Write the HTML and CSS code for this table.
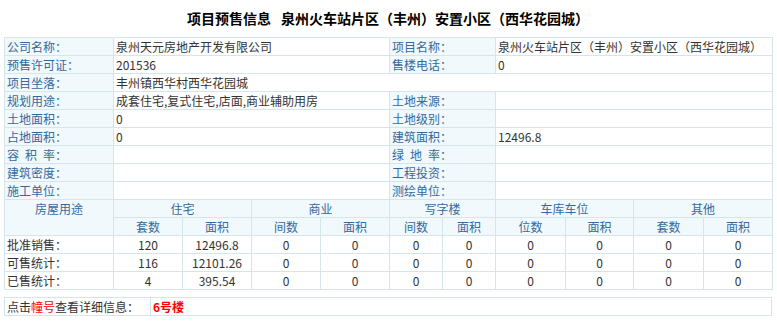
FILE: index.html
```html
<!DOCTYPE html>
<html lang="zh-CN">
<head>
  <meta charset="UTF-8" />
  <title>项目预售信息</title>
  <link rel="stylesheet" href="styles.css">
</head>
<body>
  <div class="title">项目预售信息<span class="title-name">泉州火车站片区（丰州）安置小区（西华花园城）</span></div>

  <table class="info">
    <colgroup>
      <col class="w-label">
      <col class="w69"><col class="w69">
      <col class="w69"><col class="w69">
      <col class="w53"><col class="w53">
      <col class="w70"><col class="w68">
      <col class="w70"><col class="w69">
    </colgroup>
    <tr>
      <td class="label">公司名称：</td>
      <td colspan="4">泉州天元房地产开发有限公司</td>
      <td class="label" colspan="2">项目名称：</td>
      <td colspan="4">泉州火车站片区（丰州）安置小区（西华花园城）</td>
    </tr>
    <tr>
      <td class="label">预售许可证：</td>
      <td colspan="4">201536</td>
      <td class="label" colspan="2">售楼电话：</td>
      <td colspan="4">0</td>
    </tr>
    <tr>
      <td class="label">项目坐落：</td>
      <td colspan="10">丰州镇西华村西华花园城</td>
    </tr>
    <tr>
      <td class="label">规划用途：</td>
      <td colspan="4">成套住宅,复式住宅,店面,商业辅助用房</td>
      <td class="label" colspan="2">土地来源：</td>
      <td colspan="4"></td>
    </tr>
    <tr>
      <td class="label">土地面积：</td>
      <td colspan="4">0</td>
      <td class="label" colspan="2">土地级别：</td>
      <td colspan="4"></td>
    </tr>
    <tr>
      <td class="label">占地面积：</td>
      <td colspan="4">0</td>
      <td class="label" colspan="2">建筑面积：</td>
      <td colspan="4">12496.8</td>
    </tr>
    <tr>
      <td class="label">容&ensp;积&ensp;率：</td>
      <td colspan="4"></td>
      <td class="label" colspan="2">绿&ensp;地&ensp;率：</td>
      <td colspan="4"></td>
    </tr>
    <tr>
      <td class="label">建筑密度：</td>
      <td colspan="4"></td>
      <td class="label" colspan="2">工程投资：</td>
      <td colspan="4"></td>
    </tr>
    <tr>
      <td class="label">施工单位：</td>
      <td colspan="4"></td>
      <td class="label" colspan="2">测绘单位：</td>
      <td colspan="4"></td>
    </tr>
    <tr class="head">
      <td class="use" rowspan="2">房屋用途</td>
      <td colspan="2">住宅</td>
      <td colspan="2">商业</td>
      <td colspan="2">写字楼</td>
      <td colspan="2">车库车位</td>
      <td colspan="2">其他</td>
    </tr>
    <tr class="head">
      <td>套数</td><td>面积</td>
      <td>间数</td><td>面积</td>
      <td>间数</td><td>面积</td>
      <td>位数</td><td>面积</td>
      <td>套数</td><td>面积</td>
    </tr>
    <tr class="stat">
      <td class="stat-label">批准销售：</td>
      <td>120</td><td>12496.8</td>
      <td>0</td><td>0</td><td>0</td><td>0</td>
      <td>0</td><td>0</td><td>0</td><td>0</td>
    </tr>
    <tr class="stat">
      <td class="stat-label">可售统计：</td>
      <td>116</td><td>12101.26</td>
      <td>0</td><td>0</td><td>0</td><td>0</td>
      <td>0</td><td>0</td><td>0</td><td>0</td>
    </tr>
    <tr class="stat">
      <td class="stat-label">已售统计：</td>
      <td>4</td><td>395.54</td>
      <td>0</td><td>0</td><td>0</td><td>0</td>
      <td>0</td><td>0</td><td>0</td><td>0</td>
    </tr>
  </table>

  <table class="buildings">
    <tr>
      <td class="hint">点击<span class="red">幢号</span>查看详细信息：</td>
      <td><a class="building" href="#">6号楼</a></td>
    </tr>
  </table>
</body>
</html>
```

FILE: styles.css
```css
body {
  margin: 0;
  padding: 0 5px 0 4px;
  font-family: "Noto Sans CJK SC", "Liberation Sans", sans-serif;
  font-size: 12px;
  color: #333;
  background: #fff;
}
.title {
  height: 37px;
  line-height: 37px;
  text-align: center;
  font-size: 14px;
  font-weight: bold;
  color: #000;
}
.title-name {
  margin-left: 10px;
}
table {
  width: 768px;
  border-collapse: collapse;
  table-layout: fixed;
}
td {
  height: 17px;
  padding: 0 2px;
  line-height: 17px;
  border: 1px solid #d4e6ea;
  white-space: nowrap;
  overflow: hidden;
}
.w-label { width: 109px; }
.w69 { width: 69px; }
.w53 { width: 53px; }
.w70 { width: 70px; }
.w68 { width: 68px; }
.label {
  background: #f1f9fc;
  color: #35689f;
}
.head td {
  background: #f1f9fc;
  color: #35689f;
  text-align: center;
}
.head .use {
  vertical-align: top;
}
.stat td {
  text-align: center;
}
.stat .stat-label {
  text-align: left;
  color: #333;
}
.buildings {
  margin-top: 7px;
}
.buildings .hint {
  width: 141px;
}
.red {
  color: #f00;
}
.building {
  color: #f00;
  font-weight: bold;
  text-decoration: none;
}
```
